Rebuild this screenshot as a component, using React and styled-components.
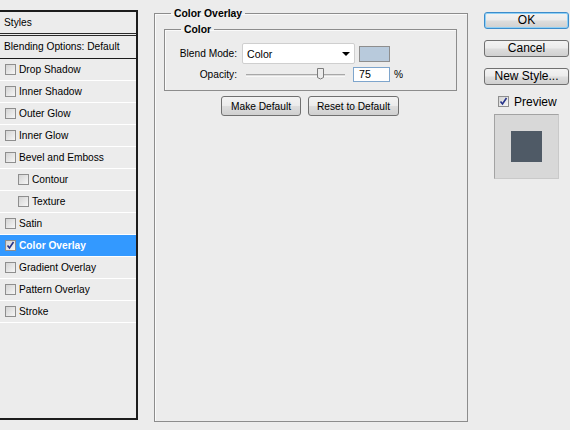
import React from "react";
import styled, { createGlobalStyle } from "styled-components";

const GlobalStyle = createGlobalStyle`
  html, body {
    margin: 0;
    padding: 0;
    background: #ececec;
  }
  body {
    font-family: "Liberation Sans", Arial, sans-serif;
    font-size: 10.2px;
    color: #000;
  }
`;

const styleRows = [
  { label: "Drop Shadow" },
  { label: "Inner Shadow" },
  { label: "Outer Glow" },
  { label: "Inner Glow" },
  { label: "Bevel and Emboss" },
  { label: "Contour", sub: true },
  { label: "Texture", sub: true },
  { label: "Satin" },
  { label: "Color Overlay", checked: true, active: true },
  { label: "Gradient Overlay" },
  { label: "Pattern Overlay" },
  { label: "Stroke" },
];

function Check({ checked }) {
  return (
    <Box>
      {checked && (
        <svg width="9" height="9" viewBox="0 0 9 9">
          <path d="M1.5 4.5 L3.5 7 L7.5 1" fill="none" stroke="#26338a" strokeWidth="1.6" />
        </svg>
      )}
    </Box>
  );
}

function App() {
  return (
    <Page>
      <GlobalStyle />
      <StylesPanel>
        <PanelHead>Styles</PanelHead>
        <BlendHead>Blending Options: Default</BlendHead>
        {styleRows.map((r) => (
          <Row key={r.label} $sub={r.sub} $active={r.active}>
            <Check checked={r.checked} />
            <span>{r.label}</span>
          </Row>
        ))}
      </StylesPanel>

      <Group>
        <Legend>Color Overlay</Legend>
        <InnerGroup>
          <Legend>Color</Legend>
          <FieldRow>
            <Label>Blend Mode:</Label>
            <Select>
              <span>Color</span>
              <Arrow />
            </Select>
            <Swatch />
          </FieldRow>
          <FieldRow $second>
            <Label>Opacity:</Label>
            <Slider>
              <Thumb style={{ left: `${75 * 0.98 - 4}px` }}>
                <svg width="9" height="13" viewBox="0 0 9 13">
                  <path
                    d="M1.5 0.5 H7.5 V9.5 Q4.5 12.5 1.5 9.5 Z"
                    fill="#ececec"
                    stroke="#7c7c7c"
                  />
                </svg>
              </Thumb>
            </Slider>
            <NumInput>75</NumInput>
            <Percent>%</Percent>
          </FieldRow>
        </InnerGroup>
        <ButtonRow>
          <Button $w={80}>Make Default</Button>
          <Button $w={91}>Reset to Default</Button>
        </ButtonRow>
      </Group>

      <Side>
        <SideButton $primary>OK</SideButton>
        <SideButton>Cancel</SideButton>
        <SideButton>New Style...</SideButton>
        <PreviewToggle>
          <Check checked />
          <span>Preview</span>
        </PreviewToggle>
        <PreviewBox>
          <PreviewSquare />
        </PreviewBox>
      </Side>
    </Page>
  );
}

export default App;

const Page = styled.div`
  width: 570px;
  height: 430px;
  display: flex;
  align-items: flex-start;
  overflow: hidden;
  background: #ececec;
`;

const StylesPanel = styled.div`
  box-sizing: border-box;
  margin-top: 10px;
  width: 138px;
  height: 410px;
  border: 2px solid #1c1c1c;
  border-left: none;
  display: flex;
  flex-direction: column;
`;

const PanelHead = styled.div`
  height: 21px;
  line-height: 21px;
  padding-left: 4px;
  border-bottom: 3px double #2a2a2a;
`;

const BlendHead = styled.div`
  height: 22px;
  line-height: 22px;
  padding-left: 4px;
  border-bottom: 1px solid #1c1c1c;
`;

const Row = styled.div`
  height: 21px;
  display: flex;
  align-items: center;
  gap: 3px;
  padding-left: ${(p) => (p.$sub ? 18 : 5)}px;
  border-bottom: 1px solid #ffffff;
  background: ${(p) => (p.$active ? "#3399ff" : "transparent")};
  color: ${(p) => (p.$active ? "#ffffff" : "#000000")};
  font-weight: ${(p) => (p.$active ? "bold" : "normal")};
`;

const Box = styled.div`
  box-sizing: border-box;
  width: 11px;
  height: 11px;
  border: 1px solid #8e8e8e;
  background: linear-gradient(135deg, #d4d4d4, #f6f6f6);
  display: flex;
  align-items: center;
  justify-content: center;
  flex-shrink: 0;
`;

const Group = styled.fieldset`
  box-sizing: border-box;
  margin: 7px 0 0 16px;
  padding: 0;
  width: 314px;
  height: 415px;
  border: 1px solid #8c8c8c;
  box-shadow: inset 1px 1px 0 #fafafa;
  display: flex;
  flex-direction: column;
  min-width: 0;
`;

const Legend = styled.legend`
  margin-left: 16px;
  padding: 0 3px;
  line-height: 13px;
  font-weight: bold;
  font-size: 10.4px;
`;

const InnerGroup = styled.fieldset`
  box-sizing: border-box;
  margin: 3px 10px 0 9px;
  padding: 7px 0 8px 0;
  border: 1px solid #8c8c8c;
  box-shadow: inset 1px 1px 0 #fafafa;
  min-width: 0;
`;

const FieldRow = styled.div`
  display: flex;
  align-items: center;
  height: ${(p) => (p.$second ? 15 : 21)}px;
  margin-top: ${(p) => (p.$second ? 3 : 0)}px;
`;

const Label = styled.div`
  width: 72px;
  text-align: right;
  flex-shrink: 0;
`;

const Select = styled.div`
  box-sizing: border-box;
  margin-left: 5px;
  width: 113px;
  height: 21px;
  background: #ffffff;
  border: 1px solid #cfcfcf;
  border-radius: 2px;
  display: flex;
  align-items: center;
  justify-content: space-between;
  padding: 0 4px 0 4px;
  font-size: 10.6px;
`;

const Arrow = styled.div`
  width: 0;
  height: 0;
  border-left: 4px solid transparent;
  border-right: 4px solid transparent;
  border-top: 4px solid #000;
  margin-top: 1px;
`;

const Swatch = styled.div`
  box-sizing: border-box;
  margin-left: 4px;
  width: 31px;
  height: 16px;
  background: #b8cadc;
  border: 1px solid #8e8e8e;
`;

const Slider = styled.div`
  position: relative;
  margin-left: 9px;
  width: 99px;
  height: 3px;
  border-top: 1px solid #a8a8a8;
  border-bottom: 1px solid #f8f8f8;
  background: #dedede;
  box-sizing: border-box;
  margin-top: 2px;
`;

const Thumb = styled.div`
  position: absolute;
  top: -7px;
  width: 9px;
  height: 13px;
  line-height: 0;
`;

const NumInput = styled.div`
  box-sizing: border-box;
  margin-left: 8px;
  width: 37px;
  height: 15px;
  background: #ffffff;
  border: 1px solid #7ea5cc;
  padding-left: 5px;
  line-height: 13px;
  font-size: 10.6px;
`;

const Percent = styled.div`
  margin-left: 4px;
`;

const ButtonRow = styled.div`
  display: flex;
  justify-content: center;
  gap: 7px;
  margin-top: 5px;
  padding-right: 2px;
`;

const Button = styled.div`
  box-sizing: border-box;
  width: ${(p) => p.$w}px;
  height: 20px;
  border: 1px solid #707070;
  border-radius: 3px;
  background: linear-gradient(#f3f3f3 0%, #ebebeb 48%, #dddddd 52%, #d0d0d0 100%);
  display: flex;
  align-items: center;
  justify-content: center;
`;

const Side = styled.div`
  margin: 12px 0 0 16px;
  width: 85px;
  display: flex;
  flex-direction: column;
  gap: 11px;
  font-size: 12px;
`;

const SideButton = styled.div`
  box-sizing: border-box;
  height: 17px;
  border: 1px solid ${(p) => (p.$primary ? "#3c8ccb" : "#707070")};
  border-radius: 3px;
  background: linear-gradient(#f3f3f3 0%, #ebebeb 48%, #dddddd 52%, #d0d0d0 100%);
  box-shadow: ${(p) => (p.$primary ? "inset 0 0 0 1px #8fd0f5" : "none")};
  display: flex;
  align-items: center;
  justify-content: center;
  line-height: 15px;
`;

const PreviewToggle = styled.div`
  display: flex;
  align-items: center;
  gap: 5px;
  padding-left: 14px;
  height: 11px;
`;

const PreviewBox = styled.div`
  box-sizing: border-box;
  margin: -4px 0 0 10px;
  width: 65px;
  height: 65px;
  background: #d8d8d8;
  border: 1px solid #a3a3a3;
  border-right-color: #c9c9c9;
  border-bottom-color: #c9c9c9;
  display: flex;
  align-items: center;
  justify-content: center;
`;

const PreviewSquare = styled.div`
  width: 31px;
  height: 31px;
  background: #4f5a66;
`;
